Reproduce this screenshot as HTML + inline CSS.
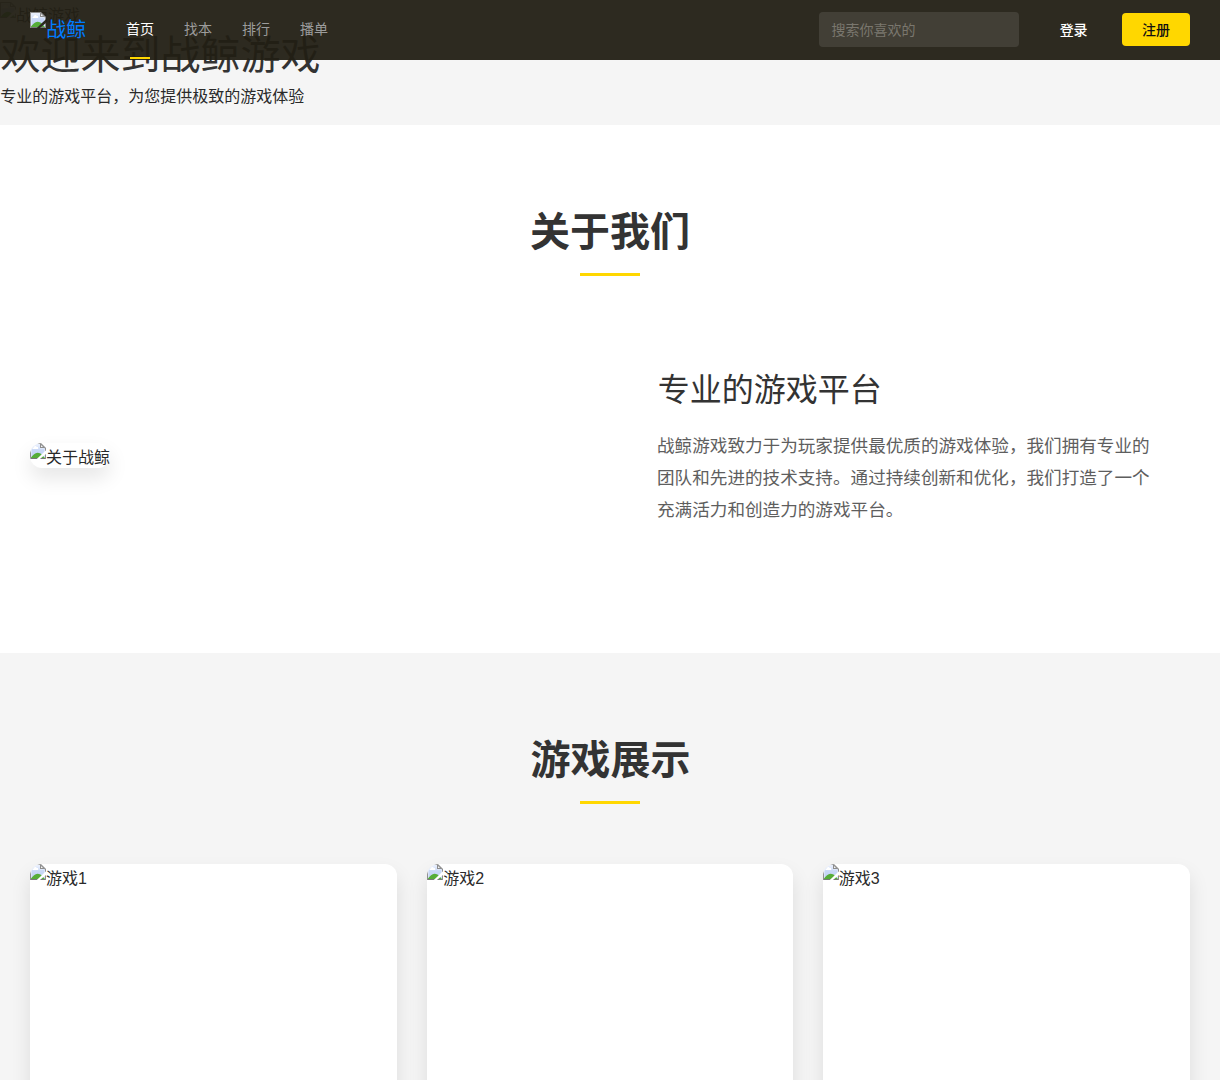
<!DOCTYPE html>
<html lang="zh-CN"><head><meta charset="utf-8"><title>战鲸游戏</title>
<style>
*{box-sizing:border-box}
html,body{margin:0;padding:0}
html{background:#f5f5f5}
body{width:1220px;height:1080px;overflow:hidden;position:relative;background:#f5f5f5;font-family:"Liberation Sans","Noto Sans CJK SC",sans-serif;color:#333}
section,header{position:absolute;left:0;width:1220px;overflow:visible}
h1,h2,h3,p,a,nav,div{margin:0;padding:0}
a{text-decoration:none;color:inherit}
.g,.bi{position:absolute;overflow:visible;display:block}
.g text{font-family:"Liberation Sans","Noto Sans CJK SC",sans-serif;font-weight:400}
.sr{position:absolute;width:1px;height:1px;margin:-1px;overflow:hidden;clip:rect(0 0 0 0);clip-path:inset(50%);white-space:nowrap;font-size:1px;color:transparent}
header{top:0;height:60px;background:rgba(34,31,20,.95);z-index:10}
.hero{top:0;height:125px;background:#f5f5f5}
.about{top:125px;height:528px;background:#fff}
.games{top:653px;height:427px;background:#f5f5f5}
.bar{position:absolute;left:580px;width:60px;height:3px;background:#ffd700}
.navbar{position:absolute;left:130px;top:57px;width:20px;height:2px;background:#ffd700}
.search{position:absolute;left:819px;top:12px;width:200px;height:35px;border-radius:4px;background:rgba(255,255,255,.1)}
.reg{position:absolute;left:1122px;top:13px;width:68px;height:33px;border-radius:4px;background:#ffd700}
.aimg{position:absolute;left:30px;top:318px;width:80px;height:25px;border-radius:12px;background:#fff;box-shadow:0 10px 20px rgba(0,0,0,.1);overflow:hidden}
.card{position:absolute;top:211px;width:366.67px;height:300px;border-radius:12px;background:#fff;box-shadow:0 10px 20px rgba(0,0,0,.1);overflow:hidden}
</style></head><body>
<svg width="0" height="0" style="position:absolute" aria-hidden="true"><defs>
<linearGradient id="sky" x1="0" y1="0" x2="0" y2="1"><stop offset="0" stop-color="#eaf0fd"/><stop offset=".4" stop-color="#c9d8f6"/><stop offset="1" stop-color="#c3d2f6"/></linearGradient>
<mask id="tear"><rect x="-1" y="-1" width="18" height="18" fill="#fff"/><path d="M16.5 6.9V10.5L9.3 16.5H6.2Z" fill="#000"/></mask>
<symbol id="bi" viewBox="0 0 16 16"><g mask="url(#tear)">
<path d="M0 0H11L16 5V16H0Z" fill="#8e8e8e"/>
<path d="M1 1H10.6L15 5.4V15H1Z" fill="#e6edfc"/>
<path d="M1.6 1.8H10V5.6H14.4V14.6H1.6Z" fill="url(#sky)"/>
<path d="M10 1H11L15.4 5H10Z" fill="#8e8e8e"/>
<path d="M11 2V4H13Z" fill="#f4f4f4"/>
<path d="M2 5.9L3.5 4.6L4.5 3.3Q5.4 2.8 6.3 3.3L6.7 4L7.8 4.1Q8.3 4.4 8.2 5.9Z" fill="#fff"/>
<path d="M1 14.6C3 12 5 9.8 7.5 9.8C9.5 9.8 11.5 11 13 13L15 15H1Z" fill="#56ad38"/>
<path d="M1 15H15V16H1Z" fill="#000" fill-opacity=".15"/>
</g></symbol></defs></svg>
<section class="hero">
<svg class="bi" style="left:0px;top:2px;" width="16" height="16" aria-hidden="true"><use href="#bi"/></svg>
<svg class="g" style="left:15px;top:5px;" width="68" height="20" viewBox="0 0 68 20" aria-hidden="true"><text x="1" y="16.1" font-size="16" fill="#333">战鲸游戏</text></svg>
<h1><span class="sr">欢迎来到战鲸游戏</span><svg class="g" style="left:-1px;top:32px;" width="323" height="43" viewBox="0 0 323 43" aria-hidden="true"><text x="1.6" y="36.66" font-size="40" fill="#333">欢迎来到战鲸游戏</text></svg></h1>
<p><span class="sr">专业的游戏平台，为您提供极致的游戏体验</span><svg class="g" style="left:-1px;top:86px;" width="308" height="21" viewBox="0 0 308 21" aria-hidden="true"><text x="1.16" y="16.27" font-size="16" fill="#2a2a2a">专业的游戏平台，为您提供极致的游戏体验</text></svg></p>
</section>
<header>
<a class="logo"><svg class="bi" style="left:30px;top:12px;" width="16" height="16" aria-hidden="true"><use href="#bi"/></svg><span class="sr">战鲸</span><svg class="g" style="left:45px;top:17px;" width="44" height="24" viewBox="0 0 44 24" aria-hidden="true"><text x="1.18" y="19.6" font-size="20" fill="#007bff">战鲸</text></svg></a>
<nav>
<a><span class="sr">首页</span><svg class="g" style="left:124px;top:20px;" width="33" height="18" viewBox="0 0 33 18" aria-hidden="true"><text x="2.11" y="14.34" font-size="14" fill="#fff">首页</text></svg></a>
<a><span class="sr">找本</span><svg class="g" style="left:182px;top:20px;" width="33" height="18" viewBox="0 0 33 18" aria-hidden="true"><text x="2.01" y="14.32" font-size="14" fill="#9c9c9c">找本</text></svg></a>
<a><span class="sr">排行</span><svg class="g" style="left:240px;top:20px;" width="33" height="18" viewBox="0 0 33 18" aria-hidden="true"><text x="2.02" y="14.31" font-size="14" fill="#9c9c9c">排行</text></svg></a>
<a><span class="sr">播单</span><svg class="g" style="left:298px;top:20px;" width="33" height="18" viewBox="0 0 33 18" aria-hidden="true"><text x="2.02" y="14.31" font-size="14" fill="#9c9c9c">播单</text></svg></a>
<i class="navbar"></i></nav>
<div class="search"><span class="sr">搜索你喜欢的</span></div>
<svg class="g" style="left:829px;top:20px;" width="88" height="18" viewBox="0 0 88 18" aria-hidden="true"><text x="2.48" y="14.53" font-size="14" fill="#7a776e">搜索你喜欢的</text></svg>
<a><span class="sr">登录</span><svg class="g" style="left:1057px;top:21px;" width="34" height="18" viewBox="0 0 34 18" aria-hidden="true"><text x="2.63" y="14.28" font-size="14" fill="#fff" style="font-weight:500">登录</text></svg></a>
<a class="reg"><span class="sr">注册</span></a>
<svg class="g" style="left:1140px;top:21px;" width="33" height="18" viewBox="0 0 33 18" aria-hidden="true"><text x="1.99" y="14.46" font-size="14" fill="#111" style="font-weight:500">注册</text></svg>
</header>
<section class="about">
<h2><span class="sr">关于我们</span><svg class="g" style="left:528px;top:84px;" width="162" height="45" viewBox="0 0 162 45" aria-hidden="true"><text x="1.91" y="36.96" font-size="40" fill="#333" style="font-weight:700">关于我们</text></svg></h2>
<i class="bar" style="top:148px"></i>
<div class="aimg"><svg class="bi" style="left:0px;top:0px;" width="16" height="16" aria-hidden="true"><use href="#bi"/></svg></div>
<svg class="g" style="left:44px;top:322px;" width="68" height="20" viewBox="0 0 68 20" aria-hidden="true"><text x="2.04" y="15.62" font-size="16" fill="#2a2a2a">关于战鲸</text></svg>
<h3><span class="sr">专业的游戏平台</span><svg class="g" style="left:657px;top:245px;" width="226" height="37" viewBox="0 0 226 37" aria-hidden="true"><text x="0.66" y="30.59" font-size="32" fill="#333">专业的游戏平台</text></svg></h3>
<p><span class="sr">战鲸游戏致力于为玩家提供最优质的游戏体验，我们拥有专业的团队和先进的技术支持。通过持续创新和优化，我们打造了一个充满活力和创造力的游戏平台。</span>
<svg class="g" style="left:656px;top:309px;" width="496" height="23" viewBox="0 0 496 23" aria-hidden="true"><text x="1" y="17.91" font-size="17.6" fill="#5e5e5e">战鲸游戏致力于为玩家提供最优质的游戏体验，我们拥有专业的</text></svg>
<svg class="g" style="left:656px;top:341px;" width="497" height="23" viewBox="0 0 497 23" aria-hidden="true"><text x="1" y="17.93" font-size="17.6" fill="#5e5e5e">团队和先进的技术支持。通过持续创新和优化，我们打造了一个</text></svg>
<svg class="g" style="left:655px;top:374px;" width="240" height="22" viewBox="0 0 240 22" aria-hidden="true"><text x="2" y="17.14" font-size="17.6" fill="#5e5e5e">充满活力和创造力的游戏平台。</text></svg>
</p></section>
<section class="games">
<h2><span class="sr">游戏展示</span><svg class="g" style="left:529px;top:84px;" width="163" height="45" viewBox="0 0 163 45" aria-hidden="true"><text x="1.43" y="37.44" font-size="40" fill="#333" style="font-weight:700">游戏展示</text></svg></h2>
<i class="bar" style="top:148px"></i>
<div class="card" style="left:30px"><svg class="bi" style="left:0px;top:0px;" width="16" height="16" aria-hidden="true"><use href="#bi"/></svg><span class="sr">游戏1</span><svg class="g" style="left:14px;top:3px;" width="45" height="21" viewBox="0 0 45 21" aria-hidden="true"><text x="2" y="16.57" font-size="16" fill="#2a2a2a">游戏1</text></svg></div>
<div class="card" style="left:426.67px"><svg class="bi" style="left:0.33px;top:0px;" width="16" height="16" aria-hidden="true"><use href="#bi"/></svg><span class="sr">游戏2</span><svg class="g" style="left:14px;top:3px;" width="45" height="21" viewBox="0 0 45 21" aria-hidden="true"><text x="2.33" y="16.57" font-size="16" fill="#2a2a2a">游戏2</text></svg></div>
<div class="card" style="left:823.33px"><svg class="bi" style="left:-0.33px;top:0px;" width="16" height="16" aria-hidden="true"><use href="#bi"/></svg><span class="sr">游戏3</span><svg class="g" style="left:14px;top:3px;" width="45" height="21" viewBox="0 0 45 21" aria-hidden="true"><text x="1.67" y="16.57" font-size="16" fill="#2a2a2a">游戏3</text></svg></div>
</section>
</body></html>
